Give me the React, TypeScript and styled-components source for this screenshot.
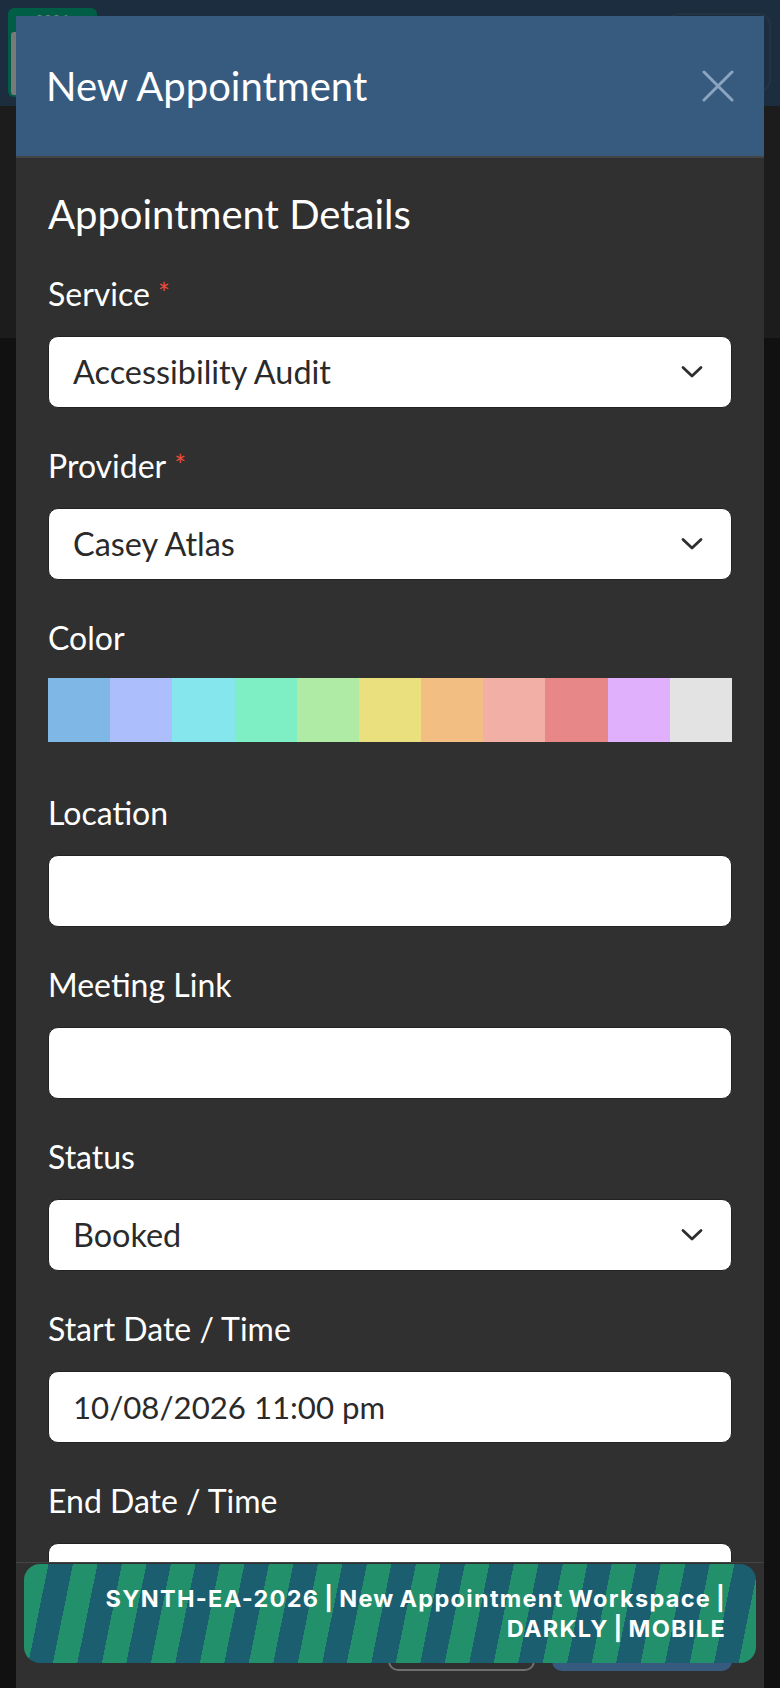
import React from "react";
import styled, { createGlobalStyle } from "styled-components";

const GlobalStyle = createGlobalStyle`
  html, body {
    margin: 0;
    padding: 0;
    background: #222222;
    font-family: Lato, "Open Sans", "Liberation Sans", sans-serif;
    color: #ffffff;
  }
  * { box-sizing: border-box; }
`;

/* ---------- page behind the dialog ---------- */

const Page = styled.div`
  min-height: 1688px;
  background: #222222;
`;

const Navbar = styled.header`
  height: 106px;
  background: #375a7f;
  display: flex;
  align-items: flex-start;
  justify-content: space-between;
  padding: 8px 9px 0 8px;
`;

const Brand = styled.div`
  width: 89px;
  height: 89px;
  border-radius: 6px;
  background: #00bc8c;
  display: flex;
  flex-direction: column;
  padding: 5px 3px 2px;
  gap: 5px;
`;

const BrandTag = styled.span`
  align-self: center;
  font: 700 13px/14px Lato, sans-serif;
  color: #e8fff6;
  letter-spacing: 1px;
`;

const BrandPlate = styled.div`
  flex: 1;
  border-radius: 3px;
  background: #f2f2f2;
`;

const NavToggle = styled.div`
  margin-top: 5px;
  width: 104px;
  height: 79px;
  border-radius: 12px;
  border: 2px solid rgba(255, 255, 255, 0.08);
`;

const HeroBand = styled.section`
  height: 232px;
  background: #383838;
`;

const Backdrop = styled.div`
  position: fixed;
  inset: 0;
  background: rgba(0, 0, 0, 0.5);
`;

/* ---------- dialog ---------- */

const Dialog = styled.div`
  position: fixed;
  top: 16px;
  left: 16px;
  right: 16px;
  bottom: 0;
  display: flex;
  flex-direction: column;
  background: #303030;
`;

const DialogHeader = styled.div`
  flex-shrink: 0;
  height: 142px;
  background: #375a7f;
  border-bottom: 2px solid #454545;
  display: flex;
  align-items: center;
  justify-content: space-between;
  padding: 0 30px 0 30px;
`;

const DialogTitle = styled.h1`
  margin: 0;
  font-family: Lato, sans-serif;
  font-weight: 400;
  font-size: 40px;
  line-height: 48px;
  color: #ffffff;
`;

const CloseButton = styled.button`
  width: 32px;
  height: 32px;
  padding: 0;
  border: 0;
  background: transparent;
  display: flex;
  align-items: center;
  justify-content: center;
  cursor: pointer;
`;

const DialogBody = styled.div`
  flex: 1;
  min-height: 0;
  overflow: hidden;
  padding: 32px 32px 0;
`;

const SectionTitle = styled.h2`
  margin: 0 0 38px;
  font-family: Lato, sans-serif;
  font-weight: 400;
  font-size: 40px;
  line-height: 48px;
  color: #ffffff;
`;

const FieldGroup = styled.div<{ $gap?: number }>`
  display: flex;
  flex-direction: column;
  margin-bottom: ${(p) => p.$gap ?? 40}px;
`;

const Label = styled.label<{ $space?: number }>`
  font-size: 32px;
  line-height: 36px;
  color: #ffffff;
  margin-bottom: ${(p) => p.$space ?? 24}px;
`;

const Required = styled.span`
  margin-left: 8px;
  color: #e74c3c;
  font-size: 28px;
  line-height: 28px;
  vertical-align: 2px;
`;

const TextInput = styled.input`
  width: 100%;
  height: 72px;
  margin: 0;
  padding: 0 24px;
  border: 1px solid #222222;
  border-radius: 10px;
  background: #ffffff;
  font-family: Lato, sans-serif;
  font-size: 31.2px;
  color: #2a2a2a;
  outline: none;
`;

const SelectBox = styled.div`
  height: 72px;
  padding: 0 28px 0 24px;
  border: 1px solid #222222;
  border-radius: 10px;
  background: #ffffff;
  display: flex;
  align-items: center;
  justify-content: space-between;
  font-size: 32.4px;
  line-height: 36px;
  color: #2a2a2a;
`;

const Swatches = styled.div`
  display: grid;
  grid-template-columns: repeat(11, 1fr);
  height: 64px;
`;

const Swatch = styled.button<{ $color: string }>`
  border: 0;
  padding: 0;
  margin: 0;
  background: ${(p) => p.$color};
  cursor: pointer;
`;

const DialogFooter = styled.div`
  flex-shrink: 0;
  border-top: 1px solid #444444;
  padding: 38px 32px 17px;
  display: flex;
  justify-content: flex-end;
  gap: 17px;
`;

const FooterButton = styled.button<{ $primary?: boolean; $width: number }>`
  width: ${(p) => p.$width}px;
  height: 70px;
  border-radius: 10px;
  font-family: Lato, sans-serif;
  font-size: 30px;
  color: #ffffff;
  border: 2px solid ${(p) => (p.$primary ? "#375a7f" : "#6f6f6f")};
  background: ${(p) => (p.$primary ? "#375a7f" : "transparent")};
`;

/* ---------- build stamp ---------- */

const Stamp = styled.div`
  position: fixed;
  left: 24px;
  right: 24px;
  bottom: 25px;
  height: 99px;
  border-radius: 16px;
  background: repeating-linear-gradient(
    101.5deg,
    #22906a 0 24px,
    #1a5e6f 24px 48px
  );
  display: flex;
  flex-direction: column;
  justify-content: center;
  align-items: flex-end;
  padding: 0 30px;
  font-family: Inter, "Liberation Sans", sans-serif;
  font-weight: 700;
  font-size: 23.5px;
  line-height: 30px;
  letter-spacing: 1.3px;
  word-spacing: -2px;
  color: #ffffff;
  text-align: right;
`;

const Chevron = () => (
  <svg width="22" height="14" viewBox="0 0 22 14" aria-hidden="true">
    <polyline
      points="2,2.5 11,11 20,2.5"
      fill="none"
      stroke="#2e2e2e"
      strokeWidth="2.8"
      strokeLinecap="round"
      strokeLinejoin="round"
    />
  </svg>
);

const CloseIcon = () => (
  <svg width="32" height="32" viewBox="0 0 32 32" aria-hidden="true">
    <path
      d="M2 2 L30 30 M30 2 L2 30"
      stroke="#8ba4bf"
      strokeWidth="3"
      strokeLinecap="round"
    />
  </svg>
);

const palette = [
  "#7fb8e6",
  "#adbefc",
  "#85e6ee",
  "#7eeec4",
  "#afeba4",
  "#ebe07e",
  "#f3be82",
  "#f2afa6",
  "#e88787",
  "#e0b0fc",
  "#e3e3e3",
];

export default function App() {
  return (
    <>
      <GlobalStyle />
      <Page>
        <Navbar>
          <Brand>
            <BrandTag>2026</BrandTag>
            <BrandPlate />
          </Brand>
          <NavToggle />
        </Navbar>
        <HeroBand />
      </Page>
      <Backdrop />

      <Dialog role="dialog" aria-label="New Appointment">
        <DialogHeader>
          <DialogTitle>New Appointment</DialogTitle>
          <CloseButton aria-label="Close">
            <CloseIcon />
          </CloseButton>
        </DialogHeader>

        <DialogBody>
          <SectionTitle>Appointment Details</SectionTitle>

          <FieldGroup>
            <Label>
              Service<Required>*</Required>
            </Label>
            <SelectBox>
              <span>Accessibility Audit</span>
              <Chevron />
            </SelectBox>
          </FieldGroup>

          <FieldGroup>
            <Label>
              Provider<Required>*</Required>
            </Label>
            <SelectBox>
              <span>Casey Atlas</span>
              <Chevron />
            </SelectBox>
          </FieldGroup>

          <FieldGroup $gap={53}>
            <Label $space={22}>Color</Label>
            <Swatches>
              {palette.map((c) => (
                <Swatch key={c} $color={c} aria-label={c} />
              ))}
            </Swatches>
          </FieldGroup>

          <FieldGroup>
            <Label>Location</Label>
            <TextInput type="text" />
          </FieldGroup>

          <FieldGroup>
            <Label>Meeting Link</Label>
            <TextInput type="text" />
          </FieldGroup>

          <FieldGroup>
            <Label>Status</Label>
            <SelectBox>
              <span>Booked</span>
              <Chevron />
            </SelectBox>
          </FieldGroup>

          <FieldGroup>
            <Label>Start Date / Time</Label>
            <TextInput type="text" defaultValue="10/08/2026 11:00 pm" />
          </FieldGroup>

          <FieldGroup>
            <Label>End Date / Time</Label>
            <TextInput type="text" defaultValue="" />
          </FieldGroup>
        </DialogBody>

        <DialogFooter>
          <FooterButton $width={147}>Cancel</FooterButton>
          <FooterButton $primary $width={180}>
            Save
          </FooterButton>
        </DialogFooter>
      </Dialog>

      <Stamp>
        <span>SYNTH-EA-2026 | New Appointment Workspace |</span>
        <span>DARKLY | MOBILE</span>
      </Stamp>
    </>
  );
}
